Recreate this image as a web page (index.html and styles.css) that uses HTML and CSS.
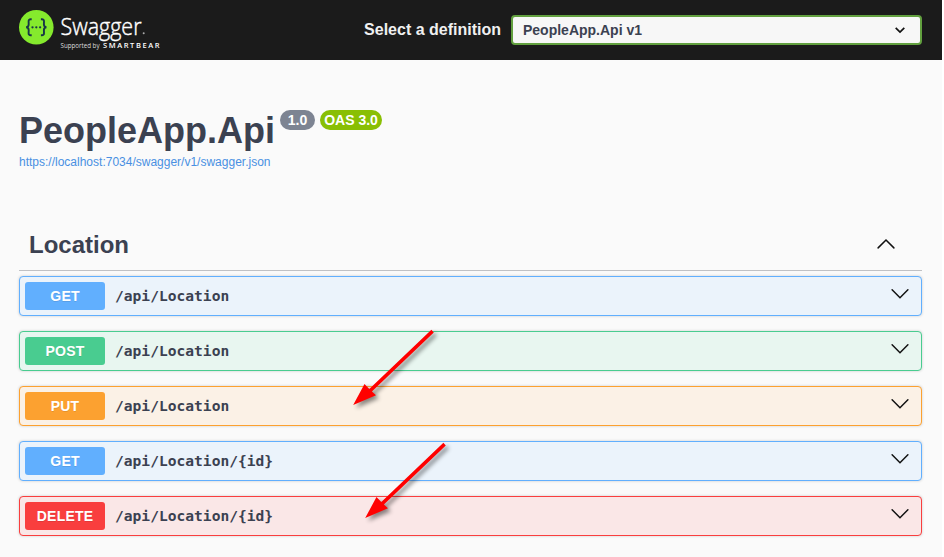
FILE: index.html
```html
<!DOCTYPE html>
<html lang="en">
<head>
<meta charset="utf-8">
<title>Swagger UI</title>
<link rel="stylesheet" href="styles.css">
</head>
<body>
<div class="page">
  <header class="topbar">
    <svg class="logo" width="145" height="50" viewBox="0 0 145 50">
      <circle cx="17.3" cy="18.3" r="17.3" fill="#85ea2d"/>
      <g fill="none" stroke="#173647" stroke-width="1.9">
        <path d="M12.7 10.300h-.9c-1.600 0-2.300.8-2.200 2.300l.1 2.700c0 1.800-.8 2.800-2.500 3 1.700.2 2.500 1.200 2.500 3l-.1 2.700c-.1 1.500.6 2.300 2.200 2.300h.9"/>
        <path d="M21.900 10.300h.9c1.600 0 2.300.8 2.200 2.300l-.1 2.700c0 1.800.8 2.800 2.500 3-1.700.2-2.500 1.200-2.500 3l.1 2.700c.1 1.500-.6 2.300-2.200 2.300h-.9"/>
      </g>
      <g fill="#173647"><circle cx="13.500" cy="18.300" r="1.150"/><circle cx="17.300" cy="18.300" r="1.150"/><circle cx="21.100" cy="18.300" r="1.150"/></g>
      <text class="logo-name" x="41.500" y="25.500" textLength="81" lengthAdjust="spacingAndGlyphs">Swagger</text>
      <circle cx="124.700" cy="24.200" r="1" fill="#aaa"/>
      <text class="logo-by" x="41.500" y="39" textLength="39" lengthAdjust="spacingAndGlyphs">Supported by</text>
      <text class="logo-brand" x="84" y="39.300" textLength="56.500" lengthAdjust="spacing">SMARTBEAR</text>
    </svg>
    <div class="definition">
      <span class="definition-label">Select a definition</span>
      <div class="select"><span>PeopleApp.Api v1</span>
        <svg width="12" height="8" viewBox="0 0 12 8"><path d="M1.700 1.800 6 6l4.300-4.200" fill="none" stroke="#111" stroke-width="1.700"/></svg>
      </div>
    </div>
  </header>
  <main>
    <section class="info">
      <div class="heading"><h1>PeopleApp.Api</h1><span class="badge version">1.0</span><span class="badge oas">OAS 3.0</span></div>
      <a class="spec">https://localhost:7034/swagger/v1/swagger.json</a>
    </section>
    <section class="operations">
      <div class="tag"><h2>Location</h2><svg width="20" height="12" viewBox="0 0 20 12"><path class="chevron" d="M2.100 9.900 10 2l7.900 7.900"/></svg></div>
      <div class="op get"><span class="method">GET</span><span class="path">/api/Location</span><svg width="20" height="12" viewBox="0 0 20 12"><path class="chevron" d="M2.100 1.800 10 9.700l7.900-7.900"/></svg></div>
      <div class="op post"><span class="method">POST</span><span class="path">/api/Location</span><svg width="20" height="12" viewBox="0 0 20 12"><path class="chevron" d="M2.100 1.800 10 9.700l7.900-7.900"/></svg></div>
      <div class="op put"><span class="method">PUT</span><span class="path">/api/Location</span><svg width="20" height="12" viewBox="0 0 20 12"><path class="chevron" d="M2.100 1.800 10 9.700l7.900-7.900"/></svg></div>
      <div class="op get"><span class="method">GET</span><span class="path">/api/Location/{id}</span><svg width="20" height="12" viewBox="0 0 20 12"><path class="chevron" d="M2.100 1.800 10 9.700l7.900-7.900"/></svg></div>
      <div class="op delete"><span class="method">DELETE</span><span class="path">/api/Location/{id}</span><svg width="20" height="12" viewBox="0 0 20 12"><path class="chevron" d="M2.100 1.800 10 9.700l7.900-7.900"/></svg></div>
    </section>
  </main>
  <svg class="arrows" width="942" height="557" viewBox="0 0 942 557">
    <path id="arrow" fill="#f00" d="M353.200 405 364.500 384 369.300 389 431.400 329.700 433.800 332.400 371.900 391.500 376 395.200Z"/>
    <use href="#arrow" x="12" y="113"/>
  </svg>
</div>
</body>
</html>
```
FILE: styles.css
```css
* { box-sizing: border-box; }
body {
  margin: 0;
  background: #fff;
  color: #3b4151;
  font-family: "Liberation Sans", Arial, sans-serif;
  overflow: hidden;
}
.page { position: relative; width: 942px; height: 557px; background: #fafafa; }
.topbar {
  display: flex;
  justify-content: space-between;
  height: 60px;
  padding: 9px 20px 0 19px;
  background: #1b1b1b;
}
.logo { display: block; }
.logo text { font-family: "Open Sans", sans-serif; fill: #fff; }
.logo .logo-name { font-size: 24px; font-weight: 300; stroke: #fff; stroke-width: .45px; }
.logo .logo-by { font-size: 6.300px; fill: #ddd; }
.logo .logo-brand { font-size: 7.500px; font-weight: 600; }
.definition { display: flex; height: 42px; align-items: center; }
.definition-label { color: #f0f0f0; font-size: 16px; font-weight: 700; margin-right: 10px; }
.select {
  display: flex;
  align-items: center;
  justify-content: space-between;
  width: 411px;
  height: 30px;
  padding: 0 14px 0 10px;
  border: 2px solid #62a03f;
  border-radius: 4px;
  background: #f7f7f7;
  font-size: 14px;
  font-weight: 700;
}
main { padding: 0 20px 0 19px; }
.info { height: 160px; padding-top: 50px; }
.heading { display: flex; align-items: flex-start; }
h1 { margin: 0; font-size: 36px; line-height: 41px; font-weight: 700; }
.badge {
  height: 20px;
  margin-left: 5px;
  border-radius: 10px;
  color: #fff;
  font-size: 14px;
  line-height: 20px;
  font-weight: 700;
  text-align: center;
}
.version { width: 35px; background: #7d8492; }
.oas { width: 62px; background: #89bf04; }
.spec { display: block; color: #4990e2; font-size: 12px; line-height: 14px; margin-top: 4px; }
.tag {
  display: flex;
  justify-content: space-between;
  align-items: center;
  height: 51px;
  margin-bottom: 5px;
  padding: 0 26px 0 10px;
  border-bottom: 1px solid #c0c1c4;
}
.tag svg { margin-bottom: 2px; }
h2 { margin: 0; font-size: 24px; font-weight: 700; }
.chevron { fill: none; stroke: #111; stroke-width: 1.5; stroke-linecap: round; }
.op {
  display: flex;
  align-items: center;
  height: 40px;
  margin-bottom: 15px;
  padding: 0 11px 0 5px;
  border: 1px solid;
  border-radius: 4px;
  box-shadow: 0 0 3px rgba(0, 0, 0, .19);
}
.op svg { margin: 0 0 5px auto; }
.method {
  width: 80px;
  height: 28px;
  border-radius: 3px;
  color: #fff;
  font-size: 14px;
  font-weight: 700;
  letter-spacing: .2px;
  line-height: 28px;
  text-align: center;
  text-shadow: 0 1px 0 rgba(0, 0, 0, .1);
}
.path { padding: 0 0 2px 10px; font: 700 14.600px "DejaVu Sans Mono", monospace; }
.get { border-color: #61affe; background: #ebf3fb; }
.get .method { background: #61affe; }
.post { border-color: #49cc90; background: #e8f6f0; }
.post .method { background: #49cc90; }
.put { border-color: #fca130; background: #fbf1e6; }
.put .method { background: #fca130; }
.delete { border-color: #f93e3e; background: #fae7e7; }
.delete .method { background: #f93e3e; }
.arrows {
  position: absolute;
  top: 0;
  left: 0;
  pointer-events: none;
  filter: drop-shadow(3px 3px 2px rgba(0, 0, 0, .45));
}
```
